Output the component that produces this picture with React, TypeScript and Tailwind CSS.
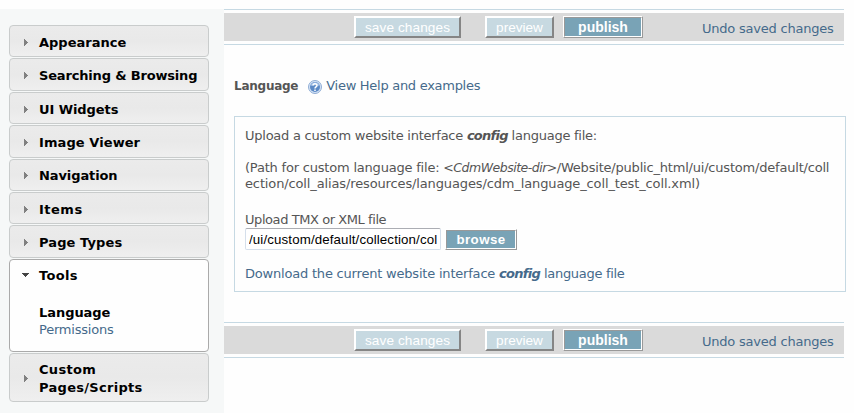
import type { ReactNode } from 'react';

const ITEM_BG = 'bg-linear-to-b from-[#ebebeb] via-[#e9e9e9] to-[#efefef]';

function Arrow({ open = false }: { open?: boolean }) {
  return (
    <svg width="8" height="8" viewBox="0 0 8 8" className="-mt-[2px] shrink-0" shapeRendering="crispEdges">
      {open ? <path d="M0 2H7L3.5 6Z" fill="#444" /> : <path d="M2 1L6 4.5L2 8Z" fill="#808080" />}
    </svg>
  );
}

function MenuItem({ label, height, tracking }: { label: string; height: string; tracking: string }) {
  return (
    <div className={`mb-px flex items-center rounded border border-[#c9cccc] pl-3 ${ITEM_BG} ${height}`}>
      <Arrow />
      <span className={`ml-[9px] text-[13px] leading-[18px] font-bold whitespace-pre text-black ${tracking}`}>{label}</span>
    </div>
  );
}

function Raised({ children, className }: { children: ReactNode; className: string }) {
  return (
    <button
      className={`h-[22px] border-2 border-t-white border-r-[#858585] border-b-[#858585] border-l-white bg-[#c7d9e1] pt-px font-['Liberation_Sans',Arial,sans-serif] leading-[17px] whitespace-nowrap text-white ${className}`}
    >
      {children}
    </button>
  );
}

function Solid({ children, className }: { children: ReactNode; className: string }) {
  return (
    <button
      className={`border border-t-white border-r-[#999] border-b-[#999] border-l-white bg-white font-['Liberation_Sans',Arial,sans-serif] font-bold whitespace-nowrap text-white ${className}`}
    >
      <span className="flex h-full items-center justify-center border border-t-[#999] border-r-white border-b-white border-l-[#999] bg-[#79a3b6]">
        {children}
      </span>
    </button>
  );
}

function ActionBar() {
  return (
    <div className="h-9 w-[620px] border-y border-[#c6d9e3] py-[3px]">
      <div className="flex h-7 items-start bg-[#dadada] pt-[3px] pl-[130px]">
        <Raised className="w-[107px] text-[13.6px] tracking-[0.1px]">save changes</Raised>
        <Raised className="ml-6 w-[69px] text-[13.6px]">preview</Raised>
        <Solid className="ml-[9px] h-[22px] w-20 text-[14px]">publish</Solid>
        <a className="mt-[5px] ml-[59px] text-[13px] leading-4 tracking-[-0.22px] whitespace-nowrap text-[#456a8b]">Undo saved changes</a>
      </div>
    </div>
  );
}

function HelpIcon() {
  return (
    <svg width="14" height="14" viewBox="0 0 14 14" className="mt-[2px] ml-[10px] shrink-0">
      <circle cx="7" cy="7" r="6.5" fill="#d5e3f5" stroke="#8fadd4" />
      <circle cx="7" cy="7" r="5" fill="#5c8ac6" />
      <path d="M2.5 6A4.6 4.6 0 0 1 11.5 6Q7 4.5 2.5 6Z" fill="#9dbce5" />
      <path d="M5 5.6C5 3.2 9 3.2 9 5.5C9 7 7 6.8 7 8.4M7 9.4V11" fill="none" stroke="#fff" strokeWidth="1.5" />
    </svg>
  );
}

export default function App() {
  return (
    <div className="flex h-[413px] w-[854px] overflow-hidden bg-[#fefefe] pt-[9px] font-['DejaVu_Sans',Verdana,sans-serif] text-[13px] leading-4 text-[#555]">
      <aside className="w-[224px] shrink-0 bg-[#f6f8f8] pt-4 pr-[15px] pl-[9px]">
        <MenuItem label="Appearance" height="h-8 pt-[4px]" tracking="tracking-[0px]" />
        <MenuItem label="Searching & Browsing" height="h-[33px] pt-[2px]" tracking="tracking-[-0.17px]" />
        <MenuItem label="UI Widgets" height="h-8 pt-[4px]" tracking="tracking-[-0.08px]" />
        <MenuItem label="Image Viewer" height="h-[33px] pt-[2px]" tracking="tracking-[0.08px]" />
        <MenuItem label="Navigation" height="h-8 pt-[2px]" tracking="tracking-[-0.1px]" />
        <MenuItem label="Items" height="h-8 pt-[4px]" tracking="tracking-[0.5px]" />
        <MenuItem label="Page Types" height="h-[33px] pt-[2px]" tracking="tracking-[0.1px]" />
        <div className="mb-px h-[93px] rounded border border-[#aaa] bg-[#fefefe] pt-2 pl-3">
          <div className="flex items-center">
            <Arrow open />
            <span className="ml-[9px] font-bold tracking-[0.3px] text-black">Tools</span>
          </div>
          <div className="mt-[21px] ml-[17px] font-bold tracking-[-0.05px] text-black">Language</div>
          <div className="mt-px ml-[17px] tracking-[-0.22px] text-[#456a8b]">Permissions</div>
        </div>
        <MenuItem label={'Custom\nPages/Scripts'} height="h-[49px] pt-[2px]" tracking="tracking-[0.3px]" />
      </aside>
      <main className="w-[630px]">
        <ActionBar />
        <div className="mt-[33px] ml-[10px] flex h-4">
          <h1 className="text-[12px] font-bold tracking-[-0.25px]">Language</h1>
          <HelpIcon />
          <a className="ml-1 tracking-[-0.28px] whitespace-nowrap text-[#456a8b]">View Help and examples</a>
        </div>
        <section className="mt-[22px] ml-[10px] h-[176px] w-[612px] border border-[#c6d9e3] pt-[11px] pl-[10px] whitespace-nowrap">
          <p className="tracking-[-0.25px]">Upload a custom website interface <b className="tracking-[-0.75px] italic">config</b> language file:</p>
          <p className="mt-4 tracking-[-0.2px]">
            (Path for custom language file: <i className="text-[12.5px] tracking-[-0.5px]">&lt;CdmWebsite-dir&gt;</i>
            <span className="tracking-[-0.2px]">/Website/public_html/ui/custom/default/coll</span>
          </p>
          <p className="tracking-[-0.13px]">ection/coll_alias/resources/languages/cdm_language_coll_test_coll.xml)</p>
          <p className="mt-5 tracking-[-0.43px]">Upload TMX or XML file</p>
          <div className="flex">
            <input
              readOnly
              value="/ui/custom/default/collection/col"
              className="h-[22px] w-[196px] rounded-xs border border-[#d5dfeb] border-t-[#abadb3] bg-white px-[3px] font-['Liberation_Sans',Arial,sans-serif] text-[13.3px] tracking-[0.13px] text-black outline-none"
            />
            <Solid className="mt-px ml-1 h-[21px] w-[72px] text-[13.3px] tracking-[0.4px]">browse</Solid>
          </div>
          <p className="mt-4 tracking-[-0.2px] text-[#456a8b]">Download the current website interface <b className="tracking-[-0.72px] italic">config</b> <span className="tracking-[-0.3px]">language file</span></p>
        </section>
        <div className="mt-[30px]">
          <ActionBar />
        </div>
      </main>
    </div>
  );
}
